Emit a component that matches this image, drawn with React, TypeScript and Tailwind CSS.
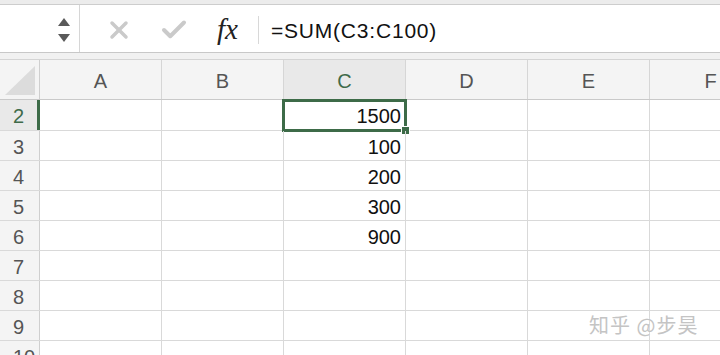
import { X, Check } from "lucide-react";

const cols = ["A", "B", "C", "D", "E", "F"];
const values: Record<number, string> = { 2: "1500", 3: "100", 4: "200", 5: "300", 6: "900" };
const rows = [2, 3, 4, 5, 6, 7, 8, 9, 10];

export default function App() {
  return (
    <div className="relative w-[720px] h-[355px] overflow-hidden bg-white text-[#222]" style={{ fontFamily: "'Liberation Sans', Arial, sans-serif" }}>
      {/* top strip */}
      <div className="h-[5px] bg-[#ececec] border-b border-[#cdcdcd]" />

      {/* formula bar */}
      <div className="h-[48px] flex items-center bg-white border-b border-[#c8c8c8]">
        <div className="w-[80px] h-full flex items-center justify-end pr-[9px] border-r border-[#d6d6d6]">
          <div className="flex flex-col gap-[8px] mt-[2px]">
            <div className="w-0 h-0 border-l-[6px] border-r-[6px] border-b-[8px] border-l-transparent border-r-transparent border-b-[#5a5a5a]" />
            <div className="w-0 h-0 border-l-[6px] border-r-[6px] border-t-[8px] border-l-transparent border-r-transparent border-t-[#5a5a5a]" />
          </div>
        </div>
        <div className="flex items-center pl-[25px] gap-[26px] mt-[3px]">
          <X size={28} strokeWidth={3} className="text-[#cacaca]" />
          <Check size={30} strokeWidth={3.2} className="text-[#cacaca]" />
          <span className="text-[29px] italic text-[#222] ml-[2px]" style={{ fontFamily: "'Liberation Serif', 'DejaVu Serif', serif" }}>
            fx
          </span>
        </div>
        <div className="ml-[20px] mt-[3px] w-px h-[28px] bg-[#d8d8d8]" />
        <div className="pl-[12px] pt-[4px] text-[21px] text-[#111] tracking-[0.8px]">=SUM(C3:C100)</div>
      </div>

      {/* gap band */}
      <div className="h-[7px] bg-[#f1f1f1] border-b border-[#d4d4d4]" />

      {/* column header */}
      <div className="h-[40px] flex bg-[#f4f4f4] border-b border-[#c9c9c9]">
        <div className="w-[40px] shrink-0 h-full border-r border-[#cfcfcf] flex items-end justify-end pr-[4px] pb-[4px]">
          <svg width="30" height="29">
            <polygon points="30,0 30,29 0,29" fill="#dcdcdc" />
          </svg>
        </div>
        {cols.map((c) => (
          <div
            key={c}
            className={
              c === "C"
                ? "w-[122px] shrink-0 h-full border-r border-[#d6d6d6] bg-[#e9e9e9] flex items-center justify-center pt-[2px] text-[20px] text-[#3f6b4a]"
                : "w-[122px] shrink-0 h-full border-r border-[#d6d6d6] flex items-center justify-center pt-[2px] text-[20px] text-[#555]"
            }
          >
            {c}
          </div>
        ))}
      </div>

      {/* rows */}
      {rows.map((r) => (
        <div key={r} className={r === 2 ? "h-[31px] flex border-b border-[#d9d9d9]" : "h-[30px] flex border-b border-[#d9d9d9]"}>
          <div
            className={
              r === 2
                ? "w-[40px] shrink-0 h-full bg-[#e9e9e9] border-r-[3px] border-[#3d6b48] flex items-center pt-[2px] pl-[13px] text-[20px] text-[#3f6b4a]"
                : "w-[40px] shrink-0 h-full bg-[#f4f4f4] border-r border-[#cfcfcf] flex items-center pt-[2px] pl-[13px] text-[20px] text-[#555]"
            }
          >
            {r}
          </div>
          {cols.map((c) => (
            <div key={c} className="relative w-[122px] shrink-0 h-full border-r border-[#d9d9d9] flex items-center justify-end pt-[2px] pr-[4px] text-[20px] text-[#111]">
              {c === "C" ? values[r] : ""}
              {c === "C" && r === 2 && (
                <>
                  <div className="absolute -left-[2px] -top-[1px] -right-[2px] -bottom-[2px] border-[3px] border-[#3d6b48]" />
                  <div className="absolute -right-[5px] -bottom-[5px] w-[9px] h-[9px] bg-[#3d6b48] border border-white" />
                </>
              )}
            </div>
          ))}
        </div>
      ))}

      {/* watermark */}
      <div
        className="absolute left-[589px] top-[310px] text-[20px] text-[#c4c4c4] tracking-[1px]"
        style={{ fontFamily: "'Noto Sans CJK SC', sans-serif", textShadow: "0 0 1px #fff" }}
      >
        知乎 @步昊
      </div>
    </div>
  );
}
